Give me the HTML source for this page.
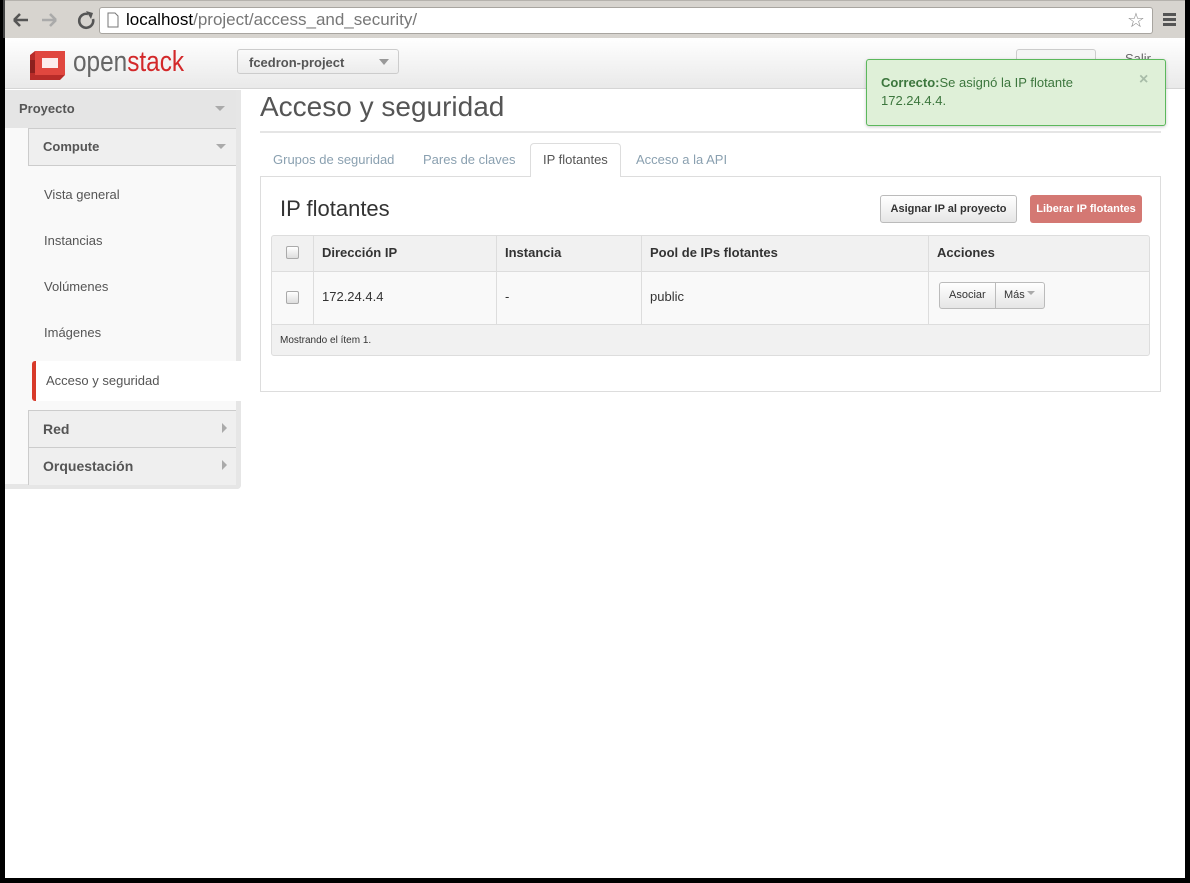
<!DOCTYPE html>
<html><head><meta charset="utf-8"><style>
*{box-sizing:border-box;margin:0;padding:0}
body{width:1190px;height:883px;background:#000;font-family:"Liberation Sans",Arial,sans-serif;position:relative;overflow:hidden}
.a{position:absolute}
.t{color:#555;font-size:13px}
</style></head><body>
<div class="a" style="left:5px;top:0;width:1180px;height:38px;background:#d7d4cf;border-top:1px solid #b5b2ad"></div>
<div class="a" style="left:3px;top:0;width:2px;height:38px;background:#444"></div>
<svg class="a" style="left:10px;top:9px" width="90" height="22" viewBox="0 0 90 22">
<path d="M4 11h14M4 11l6-6M4 11l6 6" stroke="#555" stroke-width="2.6" fill="none"/>
<path d="M32 11h14M46 11l-6-6M46 11l-6 6" stroke="#aaa" stroke-width="2.6" fill="none"/>
<path d="M78 5a7 7 0 1 0 5 5" stroke="#555" stroke-width="2.6" fill="none"/><path d="M76 2l7 2-2 6z" fill="#555"/>
</svg>
<div class="a" style="left:99px;top:7px;width:1054px;height:27px;background:#fff;border:1px solid #a8a5a0;border-radius:3px"></div>
<svg class="a" style="left:107px;top:12px" width="12" height="16"><path d="M1 1h7l3 3v11H1z" fill="#fff" stroke="#777"/></svg>
<div class="a" style="left:126px;top:10px;font-size:17px;color:#000">localhost<span style="color:#777">/project/access_and_security/</span></div>
<div class="a" style="left:1127px;top:8px;font-size:20px;color:#888">☆</div>
<div class="a" style="left:1163px;top:13px;width:13px;height:3px;background:#555;box-shadow:0 5px 0 #555,0 10px 0 #555"></div>
<div class="a" style="left:5px;top:38px;width:1180px;height:840px;background:#fff"></div>
<div class="a" style="left:5px;top:38px;width:1180px;height:51px;background:linear-gradient(#fff,#e9e9e9);border-bottom:1px solid #d5d5d5"></div>
<svg class="a" style="left:28px;top:49px" width="40" height="33" viewBox="0 0 40 33">
<path d="M2 6l5-4h30v24l-5 5H2z" fill="#b82c29"/><path d="M7 2h30v24H7z" fill="#e0473f"/><rect x="14" y="9" width="16" height="10" fill="#fff" opacity=".9"/><rect x="2" y="11" width="5" height="13" fill="#8d201e"/></svg>
<div class="a" style="left:73px;top:46px;font-size:29px;color:#666;transform:scaleX(.84);transform-origin:left">open<span style="color:#d3282a">stack</span></div>
<div class="a" style="left:237px;top:49px;width:162px;height:25px;background:linear-gradient(#fafafa,#ececec);border:1px solid #ccc;border-radius:3px;font-size:13px;font-weight:bold;color:#555;padding:5px 11px">fcedron-project</div>
<div class="a" style="left:379px;top:59px;border:5px solid transparent;border-top:6px solid #999"></div>
<div class="a" style="left:1016px;top:49px;width:80px;height:25px;border:1px solid #ccc;border-radius:3px;background:#f5f5f5"></div>
<div class="a t" style="left:1125px;top:51px;color:#666">Salir</div>
<div class="a" style="left:5px;top:90px;width:236px;height:399px;background:#f9f9f9;border-right:5px solid #e6e6e6;border-bottom:5px solid #e6e6e6;border-radius:0 0 4px 0"></div>
<div class="a" style="left:5px;top:90px;width:231px;height:38px;background:#e5e5e5"></div>
<div class="a t" style="left:19px;top:101px;font-weight:bold">Proyecto</div>
<div class="a" style="left:215px;top:106px;border:5px solid transparent;border-top:5px solid #aaa"></div>
<div class="a" style="left:28px;top:128px;width:208px;height:38px;background:#efefef;border:1px solid #ccc;border-right:0"></div>
<div class="a t" style="left:43px;top:139px;font-weight:bold">Compute</div>
<div class="a" style="left:216px;top:144px;border:5px solid transparent;border-top:5px solid #aaa"></div>
<div class="a t" style="left:44px;top:187px">Vista general</div>
<div class="a t" style="left:44px;top:233px">Instancias</div>
<div class="a t" style="left:44px;top:279px">Volúmenes</div>
<div class="a t" style="left:44px;top:325px">Imágenes</div>
<div class="a" style="left:32px;top:361px;width:209px;height:40px;background:#fff;border-left:4px solid #d83a2a;border-radius:3px 0 0 3px"></div>
<div class="a t" style="left:46px;top:373px">Acceso y seguridad</div>
<div class="a" style="left:28px;top:410px;width:208px;height:75px;background:#efefef;border:1px solid #ccc;border-right:0;border-bottom:0"></div>
<div class="a" style="left:28px;top:447px;width:208px;height:1px;background:#ccc"></div>
<div class="a t" style="left:43px;top:421px;font-weight:bold;font-size:14px">Red</div>
<div class="a t" style="left:43px;top:458px;font-weight:bold;font-size:14px">Orquestación</div>
<div class="a" style="left:222px;top:423px;border:5px solid transparent;border-left:5px solid #aaa"></div>
<div class="a" style="left:222px;top:460px;border:5px solid transparent;border-left:5px solid #aaa"></div>
<div class="a" style="left:260px;top:91px;font-size:28px;color:#555">Acceso y seguridad</div>
<div class="a" style="left:260px;top:131px;width:901px;height:2px;background:#e5e5e5"></div>
<div class="a" style="left:260px;top:176px;width:901px;height:216px;border:1px solid #ddd"></div>
<div class="a t" style="left:273px;top:152px;color:#8aa0b0">Grupos de seguridad</div>
<div class="a t" style="left:423px;top:152px;color:#8aa0b0">Pares de claves</div>
<div class="a" style="left:530px;top:143px;width:91px;height:34px;background:#fff;border:1px solid #ddd;border-bottom:0;border-radius:4px 4px 0 0"></div>
<div class="a t" style="left:543px;top:152px">IP flotantes</div>
<div class="a t" style="left:636px;top:152px;color:#8aa0b0">Acceso a la API</div>
<div class="a" style="left:280px;top:196px;font-size:22px;color:#333">IP flotantes</div>
<div class="a" style="left:880px;top:195px;width:137px;height:28px;background:linear-gradient(#fff,#e6e6e6);border:1px solid #bbb;border-radius:3px;font-size:11px;font-weight:bold;color:#333;text-align:center;line-height:26px">Asignar IP al proyecto</div>
<div class="a" style="left:1030px;top:195px;width:112px;height:28px;background:#d47873;border-radius:3px;font-size:11px;font-weight:bold;color:#fff;text-align:center;line-height:28px">Liberar IP flotantes</div>
<div class="a" style="left:271px;top:235px;width:879px;height:121px;border:1px solid #ddd;border-radius:3px;background:#f1f1f1;overflow:hidden">
<div class="a" style="left:0;top:35px;width:879px;height:54px;background:#f9f9f9;border-top:1px solid #ddd;border-bottom:1px solid #ddd"></div>
<div class="a" style="left:41px;top:0;width:1px;height:89px;background:#ddd"></div>
<div class="a" style="left:224px;top:0;width:1px;height:89px;background:#ddd"></div>
<div class="a" style="left:369px;top:0;width:1px;height:89px;background:#ddd"></div>
<div class="a" style="left:656px;top:0;width:1px;height:89px;background:#ddd"></div>
</div>
<div class="a" style="left:286px;top:246px;width:13px;height:13px;border:1px solid #aaa;border-radius:2px;background:linear-gradient(#fff,#ddd)"></div>
<div class="a" style="left:286px;top:291px;width:13px;height:13px;border:1px solid #aaa;border-radius:2px;background:linear-gradient(#fff,#ddd)"></div>
<div class="a" style="left:322px;top:245px;font-size:13px;font-weight:bold;color:#333">Dirección IP</div>
<div class="a" style="left:505px;top:245px;font-size:13px;font-weight:bold;color:#333">Instancia</div>
<div class="a" style="left:650px;top:245px;font-size:13px;font-weight:bold;color:#333">Pool de IPs flotantes</div>
<div class="a" style="left:937px;top:245px;font-size:13px;font-weight:bold;color:#333">Acciones</div>
<div class="a t" style="left:322px;top:289px;color:#333">172.24.4.4</div>
<div class="a t" style="left:505px;top:289px;color:#333">-</div>
<div class="a t" style="left:650px;top:289px;color:#333">public</div>
<div class="a" style="left:939px;top:282px;width:106px;height:27px;background:linear-gradient(#fff,#e6e6e6);border:1px solid #bbb;border-radius:3px"></div>
<div class="a" style="left:995px;top:282px;width:1px;height:27px;background:#bbb"></div>
<div class="a" style="left:949px;top:289px;font-size:11px;color:#333">Asociar</div>
<div class="a" style="left:1004px;top:289px;font-size:11px;color:#333">Más</div>
<div class="a" style="left:1027px;top:291px;border:4px solid transparent;border-top:4px solid #aaa"></div>
<div class="a" style="left:280px;top:335px;font-size:10px;color:#333">Mostrando el ítem 1.</div>
<div class="a" style="left:866px;top:59px;width:300px;height:67px;background:#dff0d8;border:1px solid #5cb85c;border-radius:3px;box-shadow:0 1px 3px rgba(0,0,0,.2)"></div>
<div class="a" style="left:881px;top:74px;font-size:13px;color:#3c763d;line-height:18px"><b>Correcto:</b>Se asignó la IP flotante<br>172.24.4.4.</div>
<div class="a" style="left:1139px;top:71px;font-size:16px;font-weight:bold;color:#a8bca8">×</div>
</body></html>
